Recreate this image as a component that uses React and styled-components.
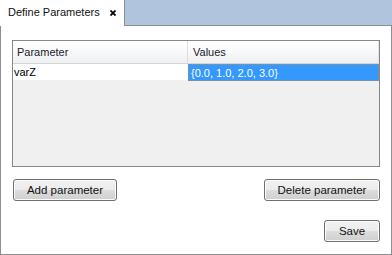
import React from "react";
import styled, { createGlobalStyle } from "styled-components";

const Global = createGlobalStyle`
  html, body { margin: 0; padding: 0; background: #fff; }
  body { font-family: "Liberation Sans", Arial, sans-serif; font-size: 11px; color: #000; }
  * { box-sizing: border-box; }
`;

const Frame = styled.div`
  width: 392px;
  height: 255px;
  display: flex;
  flex-direction: column;
`;

const TabBar = styled.div`
  display: flex;
  height: 26px;
  flex: none;
`;

const Tab = styled.div`
  width: 125px;
  height: 26px;
  background: #fff;
  border-right: 1px solid #8d8d94;
  display: flex;
  align-items: center;
  padding: 0 0 0 8px;
  gap: 10px;
  font-size: 11px;
  color: #111;
`;

const TabLabel = styled.span`
  line-height: 14px;
  margin-top: -2px;
`;

const Close = styled.svg`
  width: 6px;
  height: 6px;
  margin-top: -1px;
`;

const Filler = styled.div`
  flex: 1;
  background: #b1c4dd;
  border-bottom: 1px solid #8d8d94;
`;

const Pane = styled.div`
  flex: none;
  height: 229px;
  border: 1px solid #8d8d94;
  border-top: none;
  display: flex;
  flex-direction: column;
  padding: 14px 11px 0 11px;
`;

const Table = styled.div`
  height: 127px;
  border: 1px solid #828790;
  background: #f0f0f0;
  display: flex;
  flex-direction: column;
`;

const Row = styled.div`
  display: grid;
  grid-template-columns: 175px 1fr;
  height: ${(p) => p.$h}px;
  flex: none;
`;

const HeadCell = styled.div`
  background: linear-gradient(#ffffff 0%, #f9f9fa 45%, #eef0f2 100%);
  border-bottom: 1px solid #d5d5d5;
  border-right: ${(p) => (p.$last ? "1px solid #e4e4e4" : "1px solid #dcdcdc")};
  display: flex;
  align-items: center;
  padding-left: ${(p) => p.$pad}px;
  color: #1a1a2e;
`;

const Cell = styled.div`
  display: flex;
  align-items: center;
  padding-left: ${(p) => p.$pad}px;
  background: ${(p) => (p.$selected ? "#3399ff" : "#fff")};
  color: ${(p) => (p.$selected ? "#fff" : "#000")};
  border: ${(p) => (p.$selected ? "1px dotted #b98a5e" : "none")};
  border-bottom: 1px ${(p) => (p.$selected ? "dotted #b98a5e" : "solid #f0f0f0")};
  white-space: nowrap;
`;

const ButtonRow = styled.div`
  display: flex;
  justify-content: ${(p) => p.$justify};
  margin-top: ${(p) => p.$top}px;
  padding-left: 1px;
`;

const Button = styled.button`
  width: ${(p) => p.$w}px;
  height: 22px;
  border: 1px solid #707070;
  border-radius: 3px;
  background: linear-gradient(#f2f2f2 0%, #ebebeb 50%, #dddddd 51%, #cfcfcf 100%);
  box-shadow: inset 0 0 0 1px #fbfbfb;
  font-family: "Liberation Sans", Arial, sans-serif;
  font-size: 11.5px;
  color: #111;
  padding: 0 0 1px 0;
  cursor: default;
`;

export default function App() {
  return (
    <>
      <Global />
      <Frame>
        <TabBar>
          <Tab>
            <TabLabel>Define Parameters</TabLabel>
            <Close viewBox="0 0 6 6">
              <path d="M0.5 0.5 L5.5 5.5 M5.5 0.5 L0.5 5.5" stroke="#000" strokeWidth="1.8" />
            </Close>
          </Tab>
          <Filler />
        </TabBar>
        <Pane>
          <Table>
            <Row $h={23}>
              <HeadCell $pad={4}>Parameter</HeadCell>
              <HeadCell $pad={5} $last>Values</HeadCell>
            </Row>
            <Row $h={17}>
              <Cell $pad={1}>varZ</Cell>
              <Cell $pad={2} $selected>{"{0.0, 1.0, 2.0, 3.0}"}</Cell>
            </Row>
          </Table>
          <ButtonRow $justify="space-between" $top={12}>
            <Button $w={104}>Add parameter</Button>
            <Button $w={116}>Delete parameter</Button>
          </ButtonRow>
          <ButtonRow $justify="flex-end" $top={19}>
            <Button $w={56}>Save</Button>
          </ButtonRow>
        </Pane>
      </Frame>
    </>
  );
}
